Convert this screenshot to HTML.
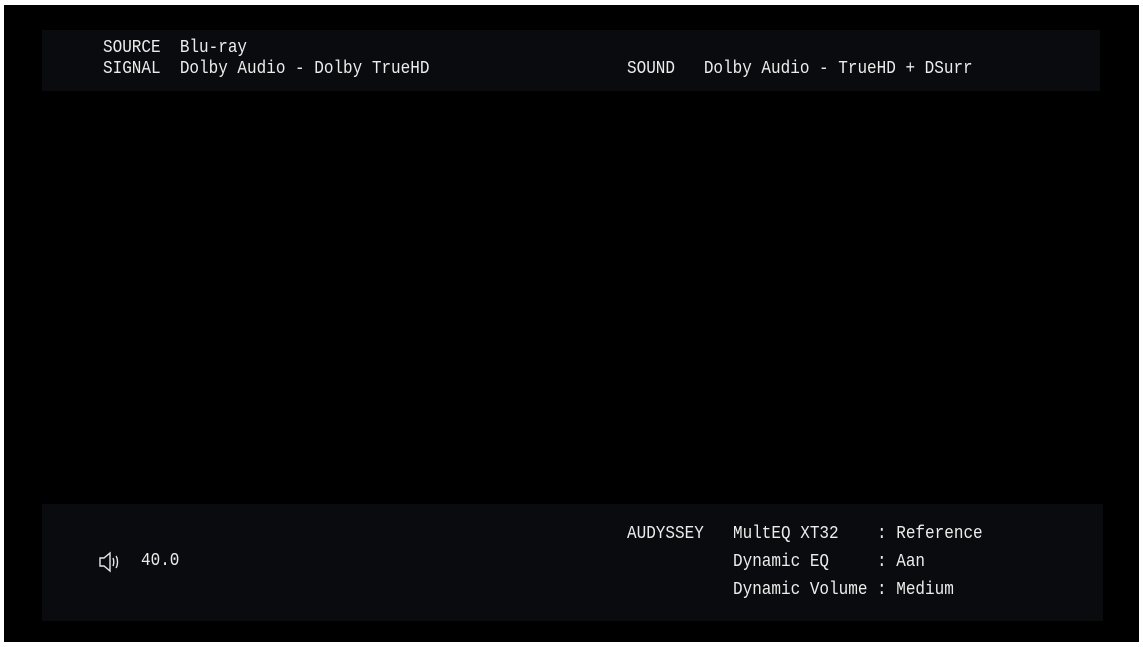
<!DOCTYPE html>
<html><head><style>
html,body{margin:0;padding:0;background:#fff;width:1143px;height:647px;overflow:hidden}
#scr{position:absolute;left:4px;top:5px;width:1135px;height:637px;background:#000}
.p{position:absolute;background:#0a0b0e}
.t{position:absolute;font-family:"Liberation Mono",monospace;font-size:16px;line-height:16px;color:#ececec;white-space:pre;transform:scaleY(1.18);transform-origin:0 0}
</style></head><body>
<div id="scr"></div>
<div class="p" style="left:42px;top:30px;width:1058px;height:61px"></div>
<div class="p" style="left:42px;top:504px;width:1061px;height:117px"></div>
<div class="t" style="left:103px;top:38px">SOURCE  Blu-ray</div>
<div class="t" style="left:103px;top:59px">SIGNAL  Dolby Audio - Dolby TrueHD</div>
<div class="t" style="left:627px;top:59px">SOUND   Dolby Audio - TrueHD + DSurr</div>
<div class="t" style="left:627px;top:524px">AUDYSSEY</div>
<div class="t" style="left:733px;top:524px">MultEQ XT32    : Reference</div>
<div class="t" style="left:733px;top:552px">Dynamic EQ     : Aan</div>
<div class="t" style="left:733px;top:580px">Dynamic Volume : Medium</div>
<div class="t" style="left:141px;top:551px">40.0</div>
<svg style="position:absolute;left:99px;top:551px" width="24" height="22" viewBox="0 0 24 22" fill="none" stroke="#e6e6e6" stroke-width="1.4">
<path d="M1 7h4l6-5v18l-6-5H1z"/>
<path d="M14 7c1 2 1 6 0 8"/>
<path d="M17 5c2 3 2 9 0 12"/>
</svg>
</body></html>
